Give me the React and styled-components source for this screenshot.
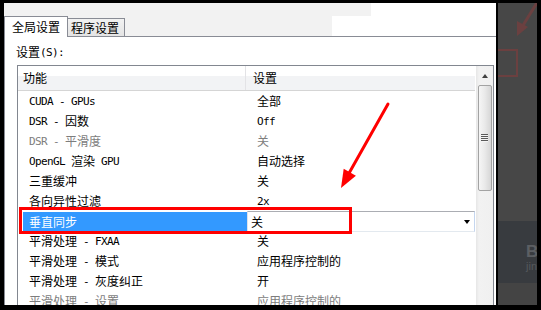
import React from "react";
import styled, { createGlobalStyle } from "styled-components";

const GlobalStyle = createGlobalStyle`
  html, body {
    margin: 0;
    padding: 0;
    background: #000;
  }
  * {
    box-sizing: border-box;
  }
`;

const Frame = styled.div`
  width: 541px;
  height: 310px;
  background: #000;
  padding: 3px 4px 5px 4px;
  display: flex;
  gap: 2px;
  font-family: "Noto Sans CJK SC", "Liberation Sans", sans-serif;
  font-size: 12px;
  color: #000;
`;

// SimSun-like half-width Latin: monospace, 6px per glyph
const Half = styled.span`
  font-family: "DejaVu Sans Mono", monospace;
  font-size: 11px;
  line-height: 1;
  letter-spacing: -0.62px;
  vertical-align: 1px;
`;

const Dialog = styled.div`
  position: relative;
  width: 492px;
  height: 302px;
  background: #fff;
  display: flex;
  flex-direction: column;
  overflow: hidden;
`;

const TabStrip = styled.div`
  height: 33px;
  flex-shrink: 0;
  display: flex;
  align-items: flex-end;
  background:
    linear-gradient(#f2f2f2, #f2f2f2) 0 0 / 367px 13px no-repeat,
    linear-gradient(#f2f2f2, #f2f2f2) 0 13px / 328px 20px no-repeat,
    #fff;
`;

const Tab = styled.div`
  position: relative;
  z-index: ${({ $active }) => ($active ? 1 : 0)};
  width: ${({ $active }) => ($active ? "64px" : "57px")};
  height: ${({ $active }) => ($active ? "21px" : "18px")};
  margin-bottom: ${({ $active }) => ($active ? "-1px" : "0")};
  padding-left: ${({ $active }) => ($active ? "7px" : "3px")};
  border: 1px solid #898c95;
  border-bottom: none;
  border-left-width: ${({ $active }) => ($active ? "1px" : "0")};
  background: ${({ $active }) =>
    $active ? "#fff" : "linear-gradient(#f2f2f2, #e4e4e4)"};
  line-height: ${({ $active }) => ($active ? "19px" : "17px")};
  white-space: nowrap;
`;

const Panel = styled.div`
  flex: 1;
  border-top: 1px solid #898c95;
  border-left: 1px solid #898c95;
  padding: 6px 2px 0 12px;
  display: flex;
  flex-direction: column;
`;

const FieldLabel = styled.div`
  line-height: 18px;
  margin-left: -1px;
`;

const ListBox = styled.div`
  margin-top: 4px;
  height: 260px;
  flex-shrink: 0;
  border: 1px solid #828790;
  display: flex;
`;

const ListBody = styled.div`
  flex: 1;
  display: flex;
  flex-direction: column;
`;

const Header = styled.div`
  height: 25px;
  display: grid;
  grid-template-columns: 228px 1fr;
  margin-right: 1px;
  border-bottom: 1px solid #d5d5d5;
  background: linear-gradient(#fff 0 10px, #f2f3f5 10px);
`;

const HeaderCell = styled.div`
  line-height: 24px;
  padding-left: ${({ $pad }) => $pad}px;
  border-right: ${({ $divider }) => ($divider ? "1px solid #e3e3e6" : "none")};
`;

const Row = styled.div`
  height: 20px;
  display: grid;
  grid-template-columns: 229px 1fr;
  color: ${({ $disabled }) => ($disabled ? "#7d7d7d" : "#000")};
`;

const NameCell = styled.div`
  line-height: 20px;
  padding-left: 11px;
  white-space: nowrap;
`;

const SelectedName = styled.div`
  margin: 1px 0 0 5px;
  height: 19px;
  line-height: 19px;
  padding-left: 6px;
  background: #3399ff;
  color: #fff;
  white-space: nowrap;
`;

const ValueCell = styled.div`
  line-height: 20px;
  padding-left: 10px;
  white-space: nowrap;
`;

const ComboBox = styled.div`
  height: 21px;
  margin-right: 1px;
  display: flex;
  align-items: center;
  justify-content: space-between;
  padding: 0 4px 0 3px;
  background: #fff;
  border: 1px solid #dfe3ea;
  border-top-color: #abadb3;
  border-bottom-color: #e3e9ef;
  border-right-color: #c5d6ef;
`;

const DropArrow = styled.span`
  width: 0;
  height: 0;
  border-left: 3.5px solid transparent;
  border-right: 3.5px solid transparent;
  border-top: 4px solid #000;
`;

const ScrollBar = styled.div`
  width: 17px;
  display: flex;
  flex-direction: column;
  align-items: center;
  background: linear-gradient(90deg, #e6e6e6, #f2f2f2 3px, #f0f0f0);
`;

const ArrowButton = styled.div`
  height: 19px;
  width: 100%;
  display: flex;
  align-items: center;
  justify-content: center;
  &::before {
    content: "";
    border-left: 3.5px solid transparent;
    border-right: 3.5px solid transparent;
    border-bottom: 4px solid #404040;
  }
`;

const Thumb = styled.div`
  width: 14px;
  height: 106px;
  border: 1px solid #a3a3a3;
  border-radius: 2px;
  background: linear-gradient(90deg, #f6f6f6, #e9e9e9 50%, #d6d6d6);
  display: flex;
  align-items: center;
  justify-content: center;
`;

const Grip = styled.div`
  width: 7px;
  height: 8px;
  background: repeating-linear-gradient(#5a5a5a 0 1px, #f4f4f4 1px 2px);
`;

const Highlight = styled.div`
  position: absolute;
  left: 15px;
  top: 204px;
  width: 333px;
  height: 27px;
  border: 3px solid #ff0000;
`;

const Overlay = styled.svg`
  position: absolute;
  left: 0;
  top: 0;
  pointer-events: none;
`;

const Backdrop = styled.div`
  position: relative;
  width: 39px;
  height: 302px;
  background: #474747;
  display: flex;
  flex-direction: column;
  justify-content: flex-end;
  overflow: hidden;
`;

const Ghost = styled.div`
  position: absolute;
  left: 0;
  top: 46px;
  width: 20px;
  height: 28px;
  border: 2px solid #6b4040;
  border-left: none;
`;

const Band = styled.div`
  height: ${({ $h }) => $h}px;
  background: ${({ $bg }) => $bg};
  padding: 22px 0 0 28px;
  font-family: "Liberation Sans", sans-serif;
`;

const GhostTitle = styled.div`
  font-weight: bold;
  font-size: 17px;
  line-height: 17px;
  color: #5c5f63;
`;

const GhostSub = styled.div`
  font-size: 11px;
  line-height: 12px;
  color: #55585c;
`;

// split a label into CJK and half-width runs
const Text = ({ children }) =>
  children
    .split(/([\x20-\x7e]+)/)
    .filter(Boolean)
    .map((part, i) =>
      /^[\x20-\x7e]+$/.test(part) ? (
        <Half key={i}>{part}</Half>
      ) : (
        <React.Fragment key={i}>{part}</React.Fragment>
      )
    );

const rows = [
  { name: "CUDA - GPUs", value: "全部" },
  { name: "DSR - 因数", value: "Off" },
  { name: "DSR - 平滑度", value: "关", disabled: true },
  { name: "OpenGL 渲染 GPU", value: "自动选择" },
  { name: "三重缓冲", value: "关" },
  { name: "各向异性过滤", value: "2x" },
  { name: "垂直同步", value: "关", selected: true },
  { name: "平滑处理 - FXAA", value: "关" },
  { name: "平滑处理 - 模式", value: "应用程序控制的" },
  { name: "平滑处理 - 灰度纠正", value: "开" },
  { name: "平滑处理 - 设置", value: "应用程序控制的", disabled: true },
];

const App = () => {
  return (
    <>
      <GlobalStyle />
      <Frame>
        <Dialog>
          <TabStrip>
            <Tab $active>全局设置</Tab>
            <Tab>程序设置</Tab>
          </TabStrip>

          <Panel>
            <FieldLabel>
              <Text>设置(S):</Text>
            </FieldLabel>
            <ListBox>
              <ListBody>
                <Header>
                  <HeaderCell $pad={5} $divider>功能</HeaderCell>
                  <HeaderCell $pad={7}>设置</HeaderCell>
                </Header>
                {rows.map((r) =>
                  r.selected ? (
                    <Row key={r.name}>
                      <SelectedName>
                        <Text>{r.name}</Text>
                      </SelectedName>
                      <ComboBox>
                        <span>{r.value}</span>
                        <DropArrow />
                      </ComboBox>
                    </Row>
                  ) : (
                    <Row key={r.name} $disabled={r.disabled}>
                      <NameCell>
                        <Text>{r.name}</Text>
                      </NameCell>
                      <ValueCell>
                        <Text>{r.value}</Text>
                      </ValueCell>
                    </Row>
                  )
                )}
              </ListBody>
              <ScrollBar>
                <ArrowButton />
                <Thumb>
                  <Grip />
                </Thumb>
              </ScrollBar>
            </ListBox>
          </Panel>

          {/* annotation: red box + arrow */}
          <Highlight />
          <Overlay width="492" height="302" viewBox="0 0 492 302">
            <line
              x1="384"
              y1="101"
              x2="344"
              y2="172"
              stroke="#ff0000"
              strokeWidth="3"
              strokeLinecap="round"
            />
            <polygon points="337,185 339.7,165.8 351.9,172.7" fill="#ff0000" />
          </Overlay>
        </Dialog>

        <Backdrop>
          <Overlay width="39" height="60" viewBox="0 0 39 60">
            <line x1="40" y1="-2" x2="24" y2="24" stroke="#6b4040" strokeWidth="3" />
            <polygon points="19,33 19,18 30,24" fill="#6b4040" />
          </Overlay>
          <Ghost />
          <Band $h={62} $bg="#383b3f">
            <GhostTitle>B</GhostTitle>
            <GhostSub>jin</GhostSub>
          </Band>
          <Band $h={15} $bg="#444444" />
        </Backdrop>
      </Frame>
    </>
  );
};

export default App;
